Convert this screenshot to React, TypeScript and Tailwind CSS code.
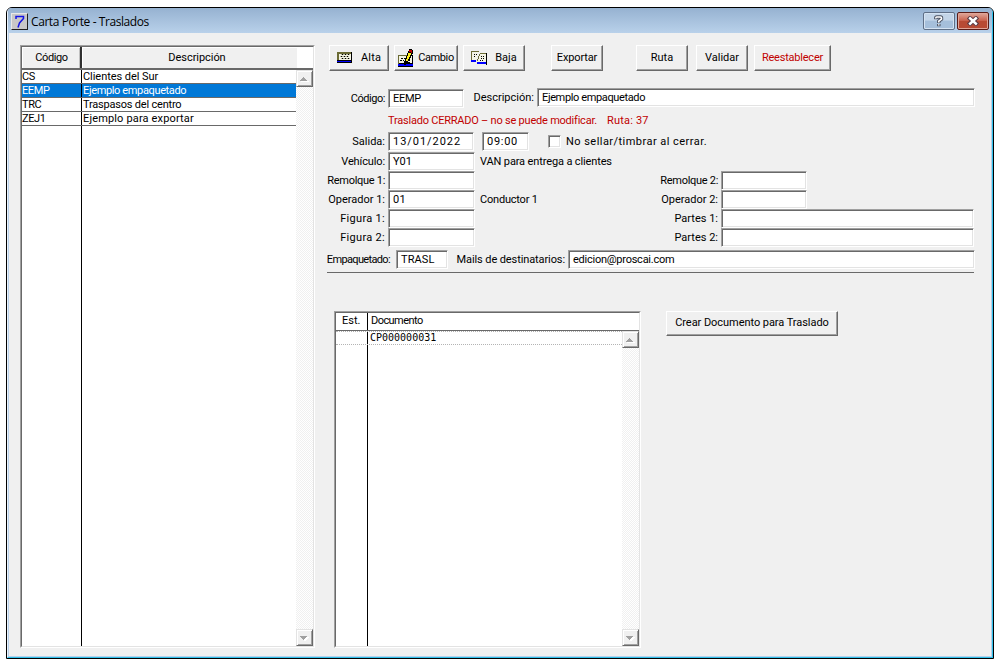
import type { ReactNode } from "react";
import clsx from "clsx";

const routes = [
  { code: "CS", name: "Clientes del Sur", track: "tracking-[-0.05px]" },
  { code: "EEMP", name: "Ejemplo empaquetado", track: "tracking-[-0.36px]", selected: true },
  { code: "TRC", name: "Traspasos del centro", track: "tracking-[-0.2px]" },
  { code: "ZEJ1", name: "Ejemplo para exportar", track: "tracking-[0.15px]" },
];

function AltaIcon() {
  return (
    <svg width="16" height="11" viewBox="0 0 16 11" shapeRendering="crispEdges" className="shrink-0">
      <path fill="#000" d="M0 0h15v11H0z" />
      <path fill="#6b6b35" d="M0 0h14v2H2v6H0z" />
      <path fill="#f4f4e4" d="M2 2h12v6H2z" />
      <path stroke="#b8b8a0" d="M4 2.5h9M3 4.500h9M4 6.500h9" />
      <path stroke="#000" strokeDasharray="1 2" d="M5 2.500h8M4 4.500h8M5 6.500h8" />
      <path fill="#0000ff" d="M0 9h14v1H0z" />
    </svg>
  );
}

function CambioIcon() {
  return (
    <svg width="17" height="18" viewBox="0 0 17 18" shapeRendering="crispEdges" className="shrink-0">
      <path fill="#000" d="M0 6h15v12H0z" />
      <path fill="#6b6b35" d="M0 6h14v1H1v8H0z" />
      <path fill="#f4f4e4" d="M1 7h13v7H1z" />
      <path stroke="#000" strokeDasharray="2 1" d="M3 9.500h4M2 11.500h4M10 11.500h3M10 13.500h3" />
      <path fill="#0000ff" d="M0 15h15v2H0z" />
      <path fill="#000" d="M11 0h3v1h1v4h-1v2h-1v2h-1v2h-1v1h-1v2H8v2H6v-4h1V9h1V7h1V4h1V2h1z" />
      <path fill="#ffee20" d="M10 4h3v2h-1v2h-1v2h-1v2H8v-2h1V7h1z" />
      <path fill="#c00000" d="M11 1h3v3h-1V3h-2z" />
    </svg>
  );
}

function BajaIcon() {
  return (
    <svg width="16" height="14" viewBox="0 0 16 14" shapeRendering="crispEdges" className="shrink-0">
      <path fill="#f4f4e4" d="M0 1h8v1H7v3H6v3H5v1H0zM9 3h6v9H6v-2h1V7h1V5h1z" />
      <path fill="#6b6b35" d="M0 0h8v1H1v8H0zM9 2h6v1H9zM8 3h1v2H8zM7 5h1v3H7zM6 8h1v2H6z" />
      <path stroke="#000" strokeDasharray="1 1" d="M3 3.500h3M3 5.500h2M10 5.500h3M10 7.500h3M9 9.500h3" />
      <path fill="#000" d="M15 2h1v12h-1z" />
      <path fill="#0000ff" d="M0 9h5v2H0zM6 11h9v2H6z" />
    </svg>
  );
}

function ToolButton({ className, children }: { className?: string; children: ReactNode }) {
  return (
    <button
      type="button"
      className={clsx(
        "flex shrink-0 items-center justify-center whitespace-nowrap border border-l-white border-t-white border-b-[#696969] border-r-[#696969] bg-[#f0f0f0] pb-px leading-3 shadow-[inset_-1px_-1px_0_#a0a0a0]",
        className,
      )}
    >
      {children}
    </button>
  );
}

function Field({ className, children }: { className?: string; children?: ReactNode }) {
  return (
    <div
      className={clsx(
        "h-[19px] shrink-0 overflow-hidden whitespace-nowrap border border-b-white border-l-[#a0a0a0] border-r-white border-t-[#a0a0a0] bg-white pl-1 pt-[3px] leading-3 shadow-[inset_1px_1px_0_#696969,inset_-1px_-1px_0_#e3e3e3]",
        className,
      )}
    >
      {children}
    </div>
  );
}

function Label({ className, children }: { className?: string; children: ReactNode }) {
  return (
    <span className={clsx("flex shrink-0 justify-end whitespace-nowrap pr-[3px] leading-3", className)}>
      <span className="mt-1">{children}</span>
    </span>
  );
}

function ScrollButton({ down }: { down?: boolean }) {
  return (
    <div className="flex h-[17px] w-[17px] shrink-0 items-center justify-center border border-b-[#696969] border-l-[#e3e3e3] border-r-[#696969] border-t-[#e3e3e3] bg-[#f0f0f0] shadow-[inset_1px_1px_0_#fff,inset_-1px_-1px_0_#a0a0a0]">
      <svg width="9" height="6" viewBox="0 0 9 6" shapeRendering="crispEdges">
        {down ? (
          <>
            <path fill="#fff" d="M1 2h8v1H8v1H7v1H6v1H4V5H3V4H2V3H1z" />
            <path fill="#a0a0a0" d="M0 1h7v1H6v1H5v1H4v1H3V4H2V3H1V2H0z" />
          </>
        ) : (
          <>
            <path fill="#fff" d="M1 5h8v1H1z" />
            <path fill="#a0a0a0" d="M3 1h1v1h1v1h1v1h1v1H0V4h1V3h1V2h1z" />
          </>
        )}
      </svg>
    </div>
  );
}

function ScrollBar() {
  return (
    <div className="flex w-[17px] shrink-0 flex-col justify-between bg-[repeating-conic-gradient(#ffffff_0_25%,#f0f0f0_0_50%)] bg-[length:2px_2px]">
      <ScrollButton />
      <ScrollButton down />
    </div>
  );
}

function TitleBar() {
  return (
    <header className="flex h-[25px] shrink-0 items-start rounded-t-[4px] bg-linear-to-b from-[#96b2d1] to-[#b9d1ea] pl-[3px] pr-[3px] pt-[4px]">
      <div className="mt-px flex h-[17px] w-[17px] items-center justify-center border border-b-[#202020] border-l-[#e8e8e8] border-r-[#202020] border-t-[#e8e8e8] bg-[#c8c8c8]">
        <svg width="11" height="13" viewBox="0 0 11 13" fill="none" stroke="#1414e6" strokeWidth="1.5">
          <path d="M2 4V1.500H9.500V3.500L5.500 8L4 12.500" />
        </svg>
      </div>
      <h1 className="ml-[3px] mt-[2px] whitespace-nowrap font-['Open_Sans',sans-serif] text-[12px] leading-4 tracking-[-0.42px] text-black">
        Carta Porte - Traslados
      </h1>
      <div className="ml-auto flex gap-[2px]">
        <button
          type="button"
          aria-label="Ayuda"
          className="flex h-[18px] w-8 items-center justify-center rounded-[2px] border border-[#5f6f86] bg-linear-to-b from-[#c3d5e8] from-45% to-[#a5bfdb] to-50% shadow-[inset_0_0_0_1px_#d5e3f2]"
        >
          <svg width="10" height="12" viewBox="0 0 10 12" fill="none">
            <path stroke="#4b5262" strokeWidth="3.4" d="M1.800 4.200V3q0-1 1-1h3.700q1 0 1 1v1.200L4.800 6.200V8M4.800 9v2.200" />
            <path stroke="#fff" strokeWidth="1.6" d="M1.800 3.600V3q0-1 1-1h3.700q1 0 1 1v1.200L4.800 6.200V7.400M4.800 9.200v1.400" />
          </svg>
        </button>
        <button
          type="button"
          aria-label="Cerrar"
          className="flex h-[18px] w-8 items-center justify-center rounded-[2px] border border-[#5a1c18] bg-linear-to-b from-[#dc9a8c] from-10% via-[#c9604c] via-48% to-[#b84a34] to-52% shadow-[inset_0_0_0_1px_#e0a598]"
        >
          <svg width="12" height="10" viewBox="0 0 12 10" fill="none">
            <path stroke="#5a3a44" strokeWidth="4.600" d="M1.400 1l9.200 8M10.600 1l-9.200 8" />
            <path stroke="#fff" strokeWidth="2.400" d="M2.200 1.500l7.600 7M9.800 1.500l-7.600 7" />
          </svg>
        </button>
      </div>
    </header>
  );
}

function RouteTable() {
  return (
    <section className="flex h-[603px] w-[295px] shrink-0 flex-col border border-b-white border-l-[#a0a0a0] border-r-white border-t-[#a0a0a0] bg-white">
      <div className="flex min-h-0 grow flex-col border border-b-[#e3e3e3] border-l-[#696969] border-r-[#e3e3e3] border-t-[#696969]">
        <div className="flex h-[23px] shrink-0 border-b-2 border-[#696969] leading-3">
          <div className="w-[58px] border-l border-t border-white bg-[#f0f0f0] pt-[4px] text-center tracking-[-0.4px] shadow-[inset_-1px_0_0_#c0c0c0]">
            Código
          </div>
          <div className="w-[2px] bg-[#303030]" />
          <div className="w-[215px] border-l border-t border-white bg-[#f0f0f0] pl-[14px] pt-[4px] text-center tracking-[-0.05px]">
            Descripción
          </div>
        </div>
        <div className="flex min-h-0 grow">
          <div className="flex grow flex-col">
            {routes.map((r) => (
              <div
                key={r.code}
                className={clsx(
                  "flex h-[14px] shrink-0 whitespace-nowrap border-b border-[#696969] leading-[14px]",
                  r.selected ? "bg-[#0078d7] text-white" : "text-black",
                )}
              >
                <span className="w-[60px] border-r border-black tracking-[-0.4px]">{r.code}</span>
                <span className={clsx("pl-px", r.track)}>{r.name}</span>
              </div>
            ))}
            <div className="w-[60px] grow border-r border-black" />
          </div>
          <ScrollBar />
        </div>
      </div>
    </section>
  );
}

function DocumentTable() {
  return (
    <section className="flex h-[337px] w-[307px] shrink-0 flex-col border border-b-white border-l-[#a0a0a0] border-r-white border-t-[#a0a0a0] bg-white">
      <div className="flex min-h-0 grow flex-col border border-b-[#e3e3e3] border-l-[#696969] border-r-[#e3e3e3] border-t-[#696969]">
        <div className="flex h-[18px] shrink-0 border-b border-[#696969] leading-3">
          <span className="w-8 border-r border-black pl-[6px] pt-[2px]">Est.</span>
          <span className="pl-[3px] pt-[2px] tracking-[-0.55px]">Documento</span>
        </div>
        <div className="flex min-h-0 grow">
          <div className="flex grow flex-col">
            <div className="flex h-[14px] shrink-0 border-y border-dotted border-[#b4b4b4] leading-3">
              <span className="w-8 border-r border-black" />
              <span className="pl-[2px] font-['DejaVu_Sans_Mono',monospace] text-[10px]">CP000000031</span>
            </div>
            <div className="w-8 grow border-r border-black" />
          </div>
          <ScrollBar />
        </div>
      </div>
    </section>
  );
}

export default function App() {
  return (
    <div className="h-[666px] w-[1004px] overflow-hidden bg-white pl-[6px] pt-[7px] font-['Roboto',sans-serif] text-[11px] text-black">
      <div className="h-[652px] w-[988px] rounded-t-[6px] border border-black bg-[#b9d1ea]">
        <div className="flex h-full flex-col rounded-t-[5px] border-b border-l border-r border-b-[#2fc0ea] border-l-[#eaf3fc] border-r-[#2fc0ea]">
          <TitleBar />
          <main className="mx-px mb-px flex grow items-start bg-[#f0f0f0] pl-[11px] pt-[12px]">
            <RouteTable />

            <div className="ml-[12px] flex flex-col">
              {/* Toolbar */}
              <div className="flex h-[26px] pl-[2px]">
                <ToolButton className="w-[60px] gap-[8px]">
                  <AltaIcon />
                  <span className="tracking-[0.2px]">Alta</span>
                </ToolButton>
                <ToolButton className="ml-[5px] w-[64px] gap-[3px]">
                  <CambioIcon />
                  <span className="tracking-[-0.4px]">Cambio</span>
                </ToolButton>
                <ToolButton className="ml-[5px] w-[62px] gap-[8px]">
                  <BajaIcon />
                  <span>Baja</span>
                </ToolButton>
                <ToolButton className="ml-[26px] w-[52px] tracking-[-0.15px]">Exportar</ToolButton>
                <ToolButton className="ml-[33px] w-[52px]">Ruta</ToolButton>
                <ToolButton className="ml-[8px] w-[52px]">Validar</ToolButton>
                <ToolButton className="ml-[6px] w-[77px] tracking-[-0.22px] text-[#c00000]">Reestablecer</ToolButton>
              </div>

              {/* Form */}
              <div className="mt-[17px] flex h-5">
                <Label className="w-[61px] pt-px tracking-[-0.45px]">Código:</Label>
                <Field className="mt-px w-[76px] tracking-[-0.3px]">EEMP</Field>
                <Label className="w-[73px]">Descripción:</Label>
                <Field className="w-[438px] tracking-[-0.37px]">Ejemplo empaquetado</Field>
              </div>
              <p className="flex h-6 gap-[10px] whitespace-nowrap pl-[61px] pt-[7px] leading-3 text-[#c00000]">
                <span className="tracking-[-0.22px]">Traslado CERRADO – no se puede modificar.</span>
                <span className="tracking-[0.2px]">Ruta: 37</span>
              </p>
              <div className="flex h-5">
                <Label className="w-[61px]">Salida:</Label>
                <Field className="w-[86px] tracking-[0.95px]">13/01/2022</Field>
                <Field className="ml-[8px] w-[47px] tracking-[0.7px]">09:00</Field>
                <span className="ml-[19px] mt-[3px] h-[13px] w-[13px] border border-b-white border-l-[#a0a0a0] border-r-white border-t-[#a0a0a0] bg-white shadow-[inset_1px_1px_0_#696969,inset_-1px_-1px_0_#e3e3e3]" />
                <Label className="ml-[5px] tracking-[0.46px]">No sellar/timbrar al cerrar.</Label>
              </div>
              <div className="flex">
                <Label className="w-[61px] tracking-[-0.12px]">Vehículo:</Label>
                <Field className="w-[87px]">Y01</Field>
                <Label className="ml-[5px] tracking-[-0.13px]">VAN para entrega a clientes</Label>
              </div>
              <div className="flex">
                <Label className="w-[61px] tracking-[-0.3px]">Remolque 1:</Label>
                <Field className="w-[87px]" />
                <Label className="w-[246px] tracking-[-0.3px]">Remolque 2:</Label>
                <Field className="w-[86px]" />
              </div>
              <div className="flex">
                <Label className="w-[61px]">Operador 1:</Label>
                <Field className="w-[87px] tracking-[0.4px]">01</Field>
                <Label className="ml-[5px] tracking-[-0.2px]">Conductor 1</Label>
                <Label className="ml-auto">Operador 2:</Label>
                <Field className="mr-[168px] w-[86px]" />
              </div>
              <div className="flex">
                <Label className="w-[61px] tracking-[0.3px]">Figura 1:</Label>
                <Field className="w-[87px]" />
                <Label className="w-[246px]">Partes 1:</Label>
                <Field className="w-[253px]" />
              </div>
              <div className="flex">
                <Label className="w-[61px] tracking-[0.3px]">Figura 2:</Label>
                <Field className="w-[87px]" />
                <Label className="w-[246px]">Partes 2:</Label>
                <Field className="w-[253px]" />
              </div>
              <div className="mt-[3px] flex">
                <Label className="w-[69px] pr-[6px] tracking-[-0.65px]">Empaquetado:</Label>
                <Field className="w-[52px] tracking-[0.1px]">TRASL</Field>
                <Label className="w-[120px] tracking-[-0.1px]">Mails de destinatarios:</Label>
                <Field className="w-[407px] tracking-[-0.25px]">edicion@proscai.com</Field>
              </div>
              <div className="mt-[3px] h-px w-[647px] bg-[#696969]" />

              {/* Documents */}
              <div className="mt-[38px] flex items-start pl-[7px]">
                <DocumentTable />
                <ToolButton className="ml-[25px] h-[25px] w-[172px] tracking-[-0.05px]">
                  Crear Documento para Traslado
                </ToolButton>
              </div>
            </div>
          </main>
        </div>
      </div>
    </div>
  );
}
